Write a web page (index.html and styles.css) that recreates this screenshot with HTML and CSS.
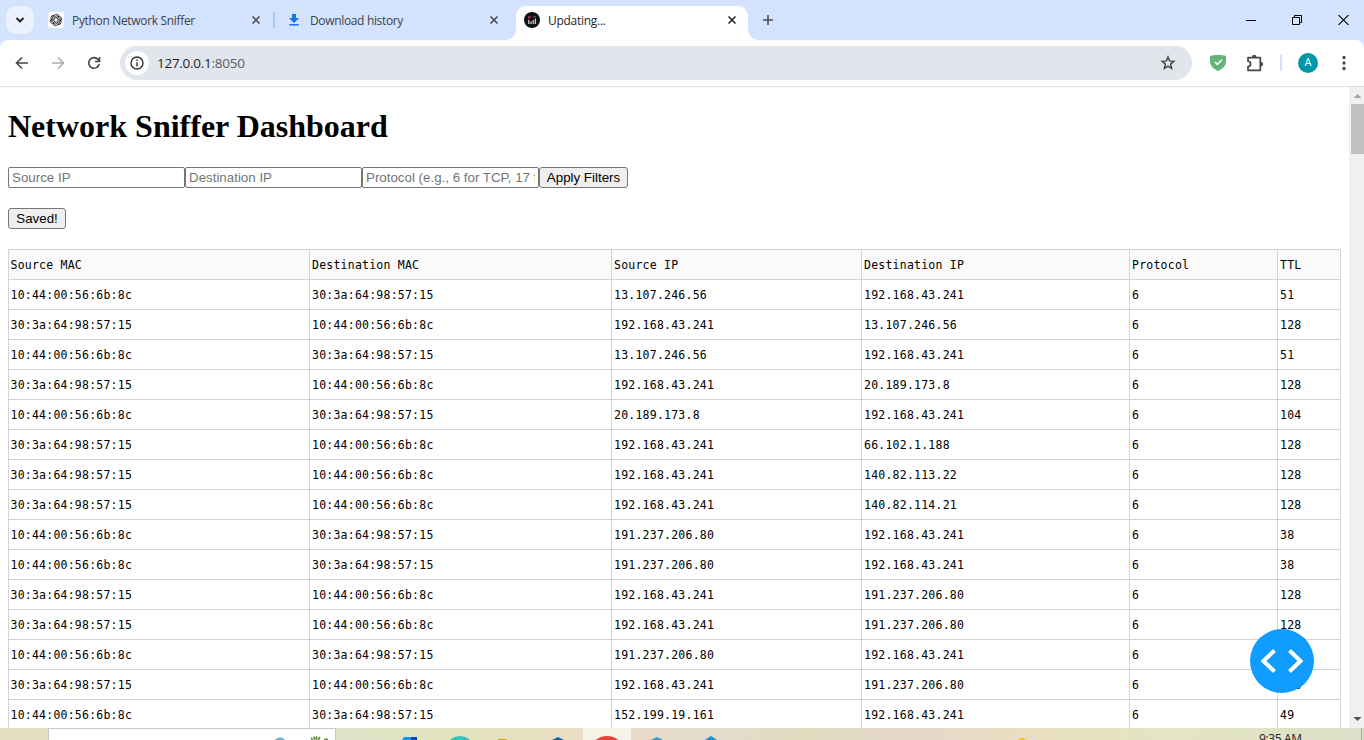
FILE: index.html
```html
<!DOCTYPE html>
<html lang="en">
<head>
<meta charset="utf-8">
<title>Updating...</title>
<link rel="stylesheet" href="styles.css">
</head>
<body>
<div class="browser">
  <header class="tabstrip">
    <div class="tab-search"><svg width="10" height="10" viewBox="0 0 10 10"><path d="M1.5 3 5 6.5 8.5 3" fill="none" stroke="#1f1f1f" stroke-width="1.8"/></svg></div>
    <div class="tab tab-first">
      <svg class="favicon" viewBox="0 0 16 16"><rect width="16" height="16" rx="3" fill="#fff"/>
        <g fill="none" stroke="#222" stroke-width=".75">
          <path id="petal" d="M6 8.9V4.8a2.6 2.6 0 0 1 4.9-1.2M6 5.3l3.4-2 2.4 1.4"/>
          <use href="#petal" transform="rotate(60 8 8)"/><use href="#petal" transform="rotate(120 8 8)"/><use href="#petal" transform="rotate(180 8 8)"/><use href="#petal" transform="rotate(240 8 8)"/><use href="#petal" transform="rotate(300 8 8)"/>
        </g></svg>
      <span class="tab-title title-python">Python Network Sniffer</span>
      <svg class="close" viewBox="0 0 8 8"><path d="M.5.5l7 7M7.5.5l-7 7"/></svg>
    </div>
    <div class="tab tab-second">
      <svg class="favicon" viewBox="0 0 16 16" fill="#1a73e8"><path d="M6 2h4v4h3L8 11 3 6h3zM3.3 12h9.5v1.6H3.3z"/></svg>
      <span class="tab-title title-download">Download history</span>
      <svg class="close" viewBox="0 0 8 8"><path d="M.5.5l7 7M7.5.5l-7 7"/></svg>
    </div>
    <div class="tab tab-active">
      <svg class="favicon" viewBox="0 0 16 16"><circle cx="8" cy="8" r="8" fill="#111"/><path d="M4.800 8v4M7 9.500V12M9.200 8v4M11.400 6.500V12" stroke="#ccc" stroke-width="1.300"/><path d="M4 4.800h3M4.800 5v2.500" stroke="#b3305c" stroke-width="1.200"/><path d="M8.600 4.800h3.400" stroke="#557" stroke-width="1.200"/></svg>
      <span class="tab-title title-updating">Updating...</span>
      <svg class="close" viewBox="0 0 8 8"><path d="M.5.5l7 7M7.5.5l-7 7"/></svg>
    </div>
    <svg class="new-tab" viewBox="0 0 10 10"><path d="M5 0v10M0 5h10" stroke="#474747" stroke-width="1.5"/></svg>
    <div class="window-controls">
      <svg width="10" height="12" viewBox="0 0 10 12"><path d="M0 6.5h10" stroke="#000"/></svg>
      <svg width="10" height="10" viewBox="0 0 10 10" fill="none" stroke="#000"><path d="M.5 2.5h7v7h-7zM2.5 2V.5h7v7H8"/></svg>
      <svg width="11" height="10" viewBox="0 0 11 10"><path d="M.5 0l10 10M10.500 0l-10 10" stroke="#111" stroke-width="1.1"/></svg>
    </div>
  </header>
  <div class="toolbar">
    <svg class="nav back" viewBox="0 0 16 16"><path d="M14 8H3M8 2.500 2.500 8 8 13.500" fill="none" stroke="#474747" stroke-width="1.6"/></svg>
    <svg class="nav forward" viewBox="0 0 16 16"><path d="M2 8h11M8 2.500 13.500 8 8 13.500" fill="none" stroke="#aeaeae" stroke-width="1.6"/></svg>
    <svg class="nav reload" viewBox="0 0 16 16"><path d="M13.200 9A5.300 5.300 0 1 1 12 4.400L13.500 6M13.500 2v4.500H9" fill="none" stroke="#474747" stroke-width="1.6"/></svg>
    <div class="omnibox">
      <span class="site-info"><svg width="14" height="14" viewBox="0 0 14 14"><circle cx="7" cy="7" r="6" fill="none" stroke="#333" stroke-width="1.4"/><path d="M7 6.200V10.500M7 3.600V5" stroke="#333" stroke-width="1.4"/></svg></span>
      <span class="url">127.0.0.1<span class="port">:8050</span></span>
      <svg class="star" viewBox="0 0 16 16"><path d="M8 2l1.600 3.900 4.200.4-3.200 2.800 1 4.200L8 11.100l-3.600 2.200 1-4.200-3.200-2.800 4.200-.4z" fill="none" stroke="#474747" stroke-width="1.500"/></svg>
    </div>
    <svg class="shield" viewBox="0 0 16 16"><path d="M8 0c3 0 5.500.3 8 1v5c0 5-3.500 8-8 10C3.500 14 0 11 0 6V1c2.500-.7 5-1 8-1z" fill="#67b279"/><path d="M5 7l2.400 2.400L12 4.700" fill="none" stroke="#fff" stroke-width="1.600"/></svg>
    <svg class="puzzle" viewBox="0 0 17 17"><path d="M2 2.700h12.300v12.600H2v-3.600c3.500-.6 3.500-5 0-5.500z" fill="none" stroke="#474747" stroke-width="1.700" stroke-linejoin="round"/><path d="M6 2a2.200 2.200 0 0 1 4.400 0zM15 7a2.100 2.100 0 0 1 0 4.200z" fill="#474747"/></svg>
    <i class="toolbar-divider"></i>
    <span class="avatar">A</span>
    <svg class="menu" viewBox="0 0 4 16" fill="#474747"><circle cx="2" cy="2.500" r="1.650"/><circle cx="2" cy="8" r="1.650"/><circle cx="2" cy="13.500" r="1.650"/></svg>
  </div>
  <div class="viewport">
    <main class="page">
      <h1>Network Sniffer Dashboard</h1>
      <div class="filters"><input type="text" placeholder="Source IP"><input type="text" placeholder="Destination IP"><input type="text" placeholder="Protocol (e.g., 6 for TCP, 17 for UDP)"><button class="apply">Apply Filters</button></div>
      <div class="save-row"><button class="save">Saved!</button></div>
      <table class="packets">
        <colgroup><col class="c-mac"><col class="c-dmac"><col class="c-src"><col class="c-dst"><col class="c-proto"><col class="c-ttl"></colgroup>
        <thead><tr><th>Source MAC</th><th>Destination MAC</th><th>Source IP</th><th>Destination IP</th><th>Protocol</th><th>TTL</th></tr></thead>
        <tbody>
          <tr><td>10:44:00:56:6b:8c</td><td>30:3a:64:98:57:15</td><td>13.107.246.56</td><td>192.168.43.241</td><td>6</td><td>51</td></tr>
          <tr><td>30:3a:64:98:57:15</td><td>10:44:00:56:6b:8c</td><td>192.168.43.241</td><td>13.107.246.56</td><td>6</td><td>128</td></tr>
          <tr><td>10:44:00:56:6b:8c</td><td>30:3a:64:98:57:15</td><td>13.107.246.56</td><td>192.168.43.241</td><td>6</td><td>51</td></tr>
          <tr><td>30:3a:64:98:57:15</td><td>10:44:00:56:6b:8c</td><td>192.168.43.241</td><td>20.189.173.8</td><td>6</td><td>128</td></tr>
          <tr><td>10:44:00:56:6b:8c</td><td>30:3a:64:98:57:15</td><td>20.189.173.8</td><td>192.168.43.241</td><td>6</td><td>104</td></tr>
          <tr><td>30:3a:64:98:57:15</td><td>10:44:00:56:6b:8c</td><td>192.168.43.241</td><td>66.102.1.188</td><td>6</td><td>128</td></tr>
          <tr><td>30:3a:64:98:57:15</td><td>10:44:00:56:6b:8c</td><td>192.168.43.241</td><td>140.82.113.22</td><td>6</td><td>128</td></tr>
          <tr><td>30:3a:64:98:57:15</td><td>10:44:00:56:6b:8c</td><td>192.168.43.241</td><td>140.82.114.21</td><td>6</td><td>128</td></tr>
          <tr><td>10:44:00:56:6b:8c</td><td>30:3a:64:98:57:15</td><td>191.237.206.80</td><td>192.168.43.241</td><td>6</td><td>38</td></tr>
          <tr><td>10:44:00:56:6b:8c</td><td>30:3a:64:98:57:15</td><td>191.237.206.80</td><td>192.168.43.241</td><td>6</td><td>38</td></tr>
          <tr><td>30:3a:64:98:57:15</td><td>10:44:00:56:6b:8c</td><td>192.168.43.241</td><td>191.237.206.80</td><td>6</td><td>128</td></tr>
          <tr><td>30:3a:64:98:57:15</td><td>10:44:00:56:6b:8c</td><td>192.168.43.241</td><td>191.237.206.80</td><td>6</td><td>128</td></tr>
          <tr><td>10:44:00:56:6b:8c</td><td>30:3a:64:98:57:15</td><td>191.237.206.80</td><td>192.168.43.241</td><td>6</td><td>38</td></tr>
          <tr><td>30:3a:64:98:57:15</td><td>10:44:00:56:6b:8c</td><td>192.168.43.241</td><td>191.237.206.80</td><td>6</td><td>128</td></tr>
          <tr><td>10:44:00:56:6b:8c</td><td>30:3a:64:98:57:15</td><td>152.199.19.161</td><td>192.168.43.241</td><td>6</td><td>49</td></tr>
        </tbody>
      </table>
    </main>
    <div class="scrollbar">
      <svg class="arrow" viewBox="0 0 15 17"><path d="M4.500 11 8.500 7l4 4z" fill="#a3a3a3"/></svg>
      <div class="thumb"></div>
      <svg class="arrow arrow-down" viewBox="0 0 15 17"><path d="M4.500 6h8l-4 4z" fill="#505050"/></svg>
    </div>
    <div class="debug-button"><svg width="64" height="64" viewBox="0 0 64 64"><path d="M24.500 21.500 13.500 32l11 10.500M39.500 21.500 50.500 32l-11 10.500" fill="none" stroke="#fff" stroke-width="4"/></svg></div>
  </div>
  <footer class="taskbar">
    <div class="search-box"><svg width="60" height="11" viewBox="0 0 60 11"><ellipse cx="5" cy="12.500" rx="5.500" ry="4" fill="#62b7dc"/><path d="M36 9l2 2M39 7.500l1 3M42 7.500l-1 3M45 8l-2 3M49 10.500h4" fill="none" stroke="#6f9145" stroke-width="1.800"/></svg></div>
    <div class="active-app"></div>
    <svg class="apps" width="720" height="12" viewBox="0 0 720 12"><path d="M67 12l2-3h12v3z" fill="#1695ee"/><path d="M76 12V9h6v3z" fill="#173fc1"/><ellipse cx="125" cy="17" rx="12" ry="9" fill="#2cc7bd"/><path d="M163 11h9v2h-9z" fill="#d6a018"/><path d="M217 12l6-3 6 3z" fill="#0e65b6"/><ellipse cx="272" cy="18" rx="14" ry="10" fill="#ea4335"/><path d="M316 12l6-3 6 3z" fill="#279fdd"/><path d="M370 12l6-4 6 4z" fill="#168fdc"/><circle cx="687" cy="15" r="5" fill="#ffc400"/></svg>
    <span class="clock">9:35 AM</span>
  </footer>
</div>
</body>
</html>
```
FILE: styles.css
```css
* { box-sizing: border-box; }
body { margin: 0; overflow: hidden; }
svg { display: block; flex: none; }
.browser { width: 1364px; height: 740px; display: flex; flex-direction: column; background: #d3e3fd; overflow: hidden; }

.tabstrip { height: 40px; flex: none; display: flex; align-items: center; background: #d3e3fd; font: 12px "Open Sans", "Noto Sans", sans-serif; }
.tab-search { width: 28px; height: 28px; margin-left: 6px; border-radius: 10px; background: #ebf2fe; display: flex; align-items: center; justify-content: center; }
.tab { height: 34px; margin-top: 6px; padding-bottom: 6px; display: flex; align-items: center; }
.tab-first { width: 241px; padding-left: 14px; padding-right: 15px; background: linear-gradient(#a8c7fa, #a8c7fa) right 0 top 6px / 2px 16px no-repeat; }
.tab-second { width: 241px; padding-left: 11px; padding-right: 18px; }
.tab-active { width: 232px; position: relative; padding-left: 8px; padding-right: 12px; background: #fff; border-radius: 10px 10px 0 0; }
.tab-active::before, .tab-active::after { content: ""; position: absolute; bottom: 0; width: 10px; height: 10px; }
.tab-active::before { left: -10px; background: radial-gradient(circle at 0 0, transparent 9.500px, #fff 10px); }
.tab-active::after { right: -10px; background: radial-gradient(circle at 100% 0, transparent 9.500px, #fff 10px); }
.favicon { width: 16px; height: 16px; }
.tab-title { margin-left: 8px; color: #3f4247; white-space: nowrap; line-height: 16px; padding-top: 2px; }
.title-python { letter-spacing: -.33px; }
.title-download { letter-spacing: -.34px; }
.title-updating { letter-spacing: -.28px; color: #1f1f1f; }
.close { width: 8px; height: 8px; margin-left: auto; stroke: #474747; stroke-width: 1.500; }
.tab-active .close { stroke: #1f1f1f; }
.new-tab { width: 10px; height: 10px; margin-left: 15px; }
.window-controls { margin-left: auto; padding-right: 15px; display: flex; align-items: center; gap: 36px; }

.toolbar { height: 47px; flex: none; display: flex; align-items: center; background: #fff; border-radius: 8px 8px 0 0; border-bottom: 1px solid #dfdfdf; }
.nav { width: 16px; height: 16px; }
.back { margin-left: 14px; }
.forward { margin-left: 20px; }
.reload { margin-left: 20px; }
.omnibox { width: 1072px; height: 34px; margin-left: 18px; padding: 0 16px 0 5px; border-radius: 17px; background: #e1e5ec; display: flex; align-items: center; }
.site-info { width: 24px; height: 24px; border-radius: 50%; background: #fff; display: flex; align-items: center; justify-content: center; }
.url { margin-left: 8px; font: 13.500px "Open Sans", "Noto Sans", sans-serif; letter-spacing: -.27px; color: #1f1f1f; }
.port { color: #5b5e63; }
.star { width: 16px; height: 16px; margin-left: auto; }
.shield { width: 16px; height: 16px; margin-left: 18px; }
.puzzle { width: 17px; height: 17px; margin-left: 20px; }
.toolbar-divider { width: 2px; height: 16px; margin-left: 17px; background: #d3e3fd; }
.avatar { width: 20px; height: 20px; margin-left: 16px; border-radius: 50%; background: #0097a7; color: #fff; font: 11px/20px Roboto, sans-serif; text-align: center; }
.menu { width: 4px; height: 16px; margin-left: 24px; }

.viewport { height: 641px; flex: none; display: flex; position: relative; background: #fff; overflow: hidden; }
.page { width: 1349px; padding: 0 8px; }
h1 { margin: 21px 0 22px; font: bold 32px/37px "Liberation Serif", serif; color: #000; }
.filters, .save-row { display: flex; height: 21px; }
.filters input { width: 177px; height: 21px; margin: 0; padding: 1px 3px; border: 1px solid #767676; border-radius: 2px; font: 13.333px "Liberation Sans", sans-serif; }
.filters input::placeholder { color: #757575; }
.save-row { margin: 20px 0; }
button { height: 21px; margin: 0; padding: 0; border: 1px solid #767676; border-radius: 3px; background: #efefef; color: #000; font: 13.333px "Liberation Sans", sans-serif; }
.apply { width: 89px; }
.save { width: 58px; }
.packets { width: 1333px; table-layout: fixed; border-collapse: separate; border-spacing: 0; border-left: 1px solid #d3d3d3; border-top: 1px solid #d3d3d3; font: 11.500px "DejaVu Sans Mono", monospace; letter-spacing: .227px; color: #000; }
.c-mac { width: 301px; }
.c-dmac { width: 302px; }
.c-src { width: 250px; }
.c-dst { width: 268px; }
.c-proto { width: 148px; }
.c-ttl { width: 63px; }
.packets th, .packets td { height: 30px; padding: 2px 0 0 2px; border-right: 1px solid #d3d3d3; border-bottom: 1px solid #d3d3d3; text-align: left; font-weight: normal; line-height: 27px; }
.packets th:first-child, .packets td:first-child { padding-left: 1.500px; }
.packets th { background: #fafafa; }
.scrollbar { width: 15px; background: #f0f0f0; display: flex; flex-direction: column; }
.arrow { width: 15px; height: 17px; }
.thumb { height: 50px; margin-left: 2px; background: #c1c1c1; }
.arrow-down { margin-top: auto; }
.debug-button { position: absolute; left: 1250px; top: 542px; width: 64px; height: 64px; border-radius: 50%; background: #119dff; }

.taskbar { height: 12px; flex: none; position: relative; overflow: hidden; background: linear-gradient(90deg, #e4dfc0, #dee3c8 25%, #e2e4be 33%, #e8e1bf 39%, #e6dac9 47%, #e4dbc9 53%, #e2dcc0 59%, #e4d8c9 67%, #e9e1bf 77%, #e3e5c3 86%, #dcdfc7); }
.search-box { width: 288px; height: 12px; margin-left: 48px; padding-left: 226px; background: #fff; border: 1px solid #c8c8c8; border-bottom: 0; }
.active-app { position: absolute; left: 583px; top: 0; width: 48px; height: 12px; background: #f5f2e6; }
.apps { position: absolute; left: 335px; top: 0; }
.clock { position: absolute; left: 1259px; top: 3px; font: 12px/16px "Open Sans", "Noto Sans", sans-serif; letter-spacing: -.35px; color: #222; white-space: nowrap; }
.taskbar::after { content: ""; position: absolute; right: 2px; top: 0; width: 1px; height: 12px; background: #aaad94; }
```
